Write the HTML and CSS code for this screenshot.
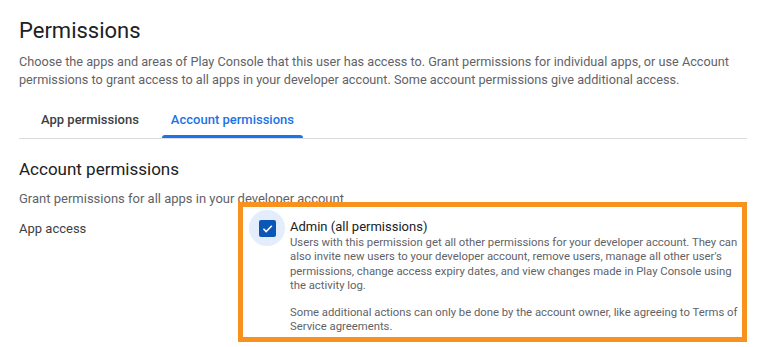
FILE: index.html
```html
<!DOCTYPE html>
<html>
<head>
    <title>Permissions</title>
    <link rel="stylesheet" href="styles.css">
</head>
<body>
    <div class="page">
        <h1 class="title">Permissions</h1>
        <p class="intro">Choose the apps and areas of Play Console that this user has access to. Grant permissions for individual apps, or use Account permissions to grant access to all apps in your developer account. Some account permissions give additional access.</p>

        <div class="tabs">
            <div class="tab">App permissions</div>
            <div class="tab active">Account permissions</div>
        </div>

        <h2 class="section-title">Account permissions</h2>
        <p class="section-sub">Grant permissions for all apps in your developer account</p>

        <div class="perm-row">
            <div class="perm-label">App access</div>
            <div class="perm-option">
                <div class="check-wrap">
                    <span class="checkbox">
                        <svg width="13" height="13" viewBox="0 0 24 24"><path d="M4.5 12.5l5 5L20 7" fill="none" stroke="#fff" stroke-width="3"/></svg>
                    </span>
                </div>
                <div class="option-text">
                    <div class="option-title">Admin (all permissions)</div>
                    <p class="option-desc">Users with this permission get all other permissions for your developer account. They can also invite new users to your developer account, remove users, manage all other user's permissions, change access expiry dates, and view changes made in Play Console using the activity log.</p>
                    <p class="option-desc extra">Some additional actions can only be done by the account owner, like agreeing to Terms of Service agreements.</p>
                </div>
            </div>
        </div>
    </div>
</body>
</html>
```

FILE: styles.css
```css
body {
    margin: 0;
    font-family: Roboto, "Liberation Sans", sans-serif;
    background-color: #FFFFFF;
    color: #202124;
}

.page {
    padding: 17px 18px 0 19px;
}

.title {
    font-size: 22px;
    font-weight: 400;
    line-height: 28px;
    margin: 0;
    color: #202124;
}

.intro {
    font-size: 12.7px;
    line-height: 18px;
    color: #5f6368;
    margin: 8px 0 0 0;
}

/* tabs */
.tabs {
    display: flex;
    gap: 14px;
    margin-top: 13px;
    padding-left: 13px;
    border-bottom: 1px solid #dadce0;
}

.tab {
    position: relative;
    height: 36px;
    line-height: 36px;
    padding: 0 9px;
    font-size: 13px;
    font-weight: 500;
    color: #3c4043;
}

.tab.active {
    color: #1a73e8;
}

.tab.active::after {
    content: "";
    position: absolute;
    left: 0;
    right: 0;
    bottom: 0;
    height: 3px;
    background-color: #1a73e8;
    border-radius: 3px 3px 0 0;
}

.section-title {
    font-size: 17px;
    font-weight: 400;
    line-height: 24px;
    margin: 18px 0 0 0;
    color: #202124;
}

.section-sub {
    font-size: 13px;
    line-height: 18px;
    color: #5f6368;
    margin: 9px 0 0 0;
}

/* permission row */
.perm-row {
    display: flex;
    align-items: flex-start;
}

.perm-label {
    width: 219px;
    flex-shrink: 0;
    padding-top: 12px;
    font-size: 13px;
    line-height: 18px;
    color: #3c4043;
}

.perm-option {
    display: flex;
    gap: 5px;
    width: 497px;
    margin-top: -6px;
    padding: 3px 3px 2px 6px;
    border: 5px solid #f7921e;
}

.check-wrap {
    width: 36px;
    height: 36px;
    flex-shrink: 0;
    border-radius: 50%;
    background-color: #e3edfb;
    display: flex;
    align-items: center;
    justify-content: center;
}

.checkbox {
    width: 17px;
    height: 17px;
    border-radius: 2px;
    background-color: #0b57b8;
    display: flex;
    align-items: center;
    justify-content: center;
}

.option-text {
    padding-top: 8px;
}

.option-title {
    font-size: 13px;
    line-height: 18px;
    color: #202124;
}

.option-desc {
    font-size: 11.3px;
    line-height: 14.3px;
    color: #5f6368;
    margin: 0;
}

.option-desc.extra {
    margin-top: 13px;
}
```
